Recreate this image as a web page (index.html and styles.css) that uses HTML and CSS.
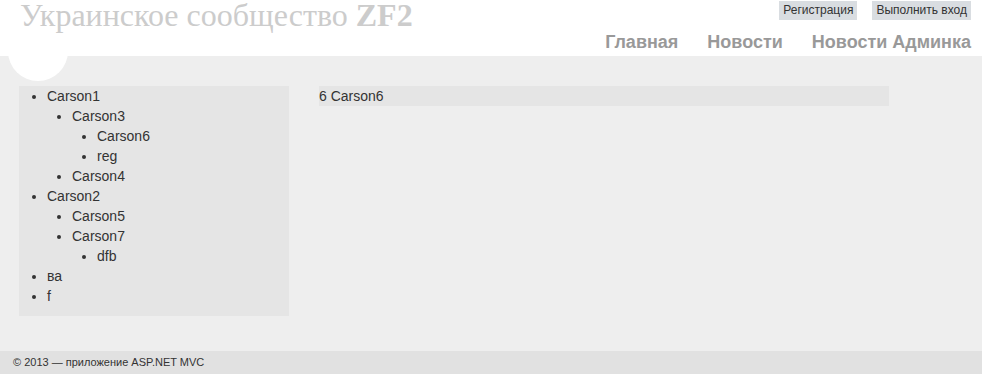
FILE: index.html
```html
<!DOCTYPE html>
<html lang="ru">
<head>
    <meta charset="UTF-8">
    <meta name="viewport" content="width=device-width, initial-scale=1.0">
    <title>Украинское сообщество ZF2</title>
    <link rel="stylesheet" href="styles.css">
</head>
<body>
    <!-- Header with title, login links and main menu -->
    <header class="site-header">
        <div class="site-title">Украинское сообщество <b>ZF2</b></div>
        <div class="header-right">
            <div class="login-links">
                <a href="#" class="login-link">Регистрация</a>
                <a href="#" class="login-link">Выполнить вход</a>
            </div>
            <nav class="main-menu">
                <a href="#">Главная</a>
                <a href="#">Новости</a>
                <a href="#">Новости Админка</a>
            </nav>
        </div>
        <div class="logo-circle"></div>
    </header>

    <div class="page-body">
        <!-- Category tree -->
        <aside class="sidebar">
            <ul class="tree">
                <li>Carson1
                    <ul>
                        <li>Carson3
                            <ul>
                                <li>Carson6</li>
                                <li>reg</li>
                            </ul>
                        </li>
                        <li>Carson4</li>
                    </ul>
                </li>
                <li>Carson2
                    <ul>
                        <li>Carson5</li>
                        <li>Carson7
                            <ul>
                                <li>dfb</li>
                            </ul>
                        </li>
                    </ul>
                </li>
                <li>ва</li>
                <li>f</li>
            </ul>
        </aside>

        <!-- Selected item -->
        <section class="content">
            <div class="item-row">6 Carson6</div>
        </section>
    </div>

    <footer class="site-footer">&copy; 2013 &mdash; приложение ASP.NET MVC</footer>
</body>
</html>
```

FILE: styles.css
```css
body {
    margin: 0;
    font-family: "Liberation Sans", Arial, sans-serif;
    font-size: 14px;
    color: #333;
    background-color: #eeeeee;
}
a {
    color: inherit;
    text-decoration: none;
}
.site-header {
    position: relative;
    height: 56px;
    background-color: #fff;
    display: flex;
    justify-content: space-between;
    padding: 0 11px 0 20px;
}
.site-title {
    position: relative;
    z-index: 1;
    font-family: "Liberation Serif", "Times New Roman", serif;
    font-size: 32px;
    line-height: 28px;
    padding-top: 1px;
    color: #cccccc;
}
.header-right {
    position: relative;
    z-index: 1;
    display: flex;
    flex-direction: column;
    align-items: flex-end;
}
.login-links {
    display: flex;
    gap: 15px;
    margin-top: 1px;
}
.login-link {
    font-size: 12px;
    line-height: 19px;
    padding: 0 4px;
    background-color: #d9dde1;
    color: #333;
}
.main-menu {
    display: flex;
    gap: 29px;
    margin-top: 10px;
}
.main-menu a {
    font-size: 18px;
    font-weight: bold;
    line-height: 24px;
    color: #999999;
}
.logo-circle {
    position: absolute;
    left: 8px;
    top: 21px;
    width: 60px;
    height: 60px;
    border-radius: 50%;
    background-color: #fff;
}
.page-body {
    display: flex;
    align-items: flex-start;
    gap: 30px;
    padding: 30px 0 35px 19px;
}
.sidebar {
    width: 270px;
    background-color: #e5e5e5;
    padding-bottom: 10px;
}
.tree, .tree ul {
    margin: 0;
    padding-left: 25px;
    line-height: 20px;
}
.tree {
    padding-left: 28px;
}
.tree li {
    list-style: disc;
}
.content {
    width: 570px;
}
.item-row {
    line-height: 20px;
    background-color: #e5e5e5;
}
.site-footer {
    height: 23px;
    line-height: 23px;
    padding-left: 13px;
    font-size: 11px;
    background-color: #e1e1e1;
}
```
